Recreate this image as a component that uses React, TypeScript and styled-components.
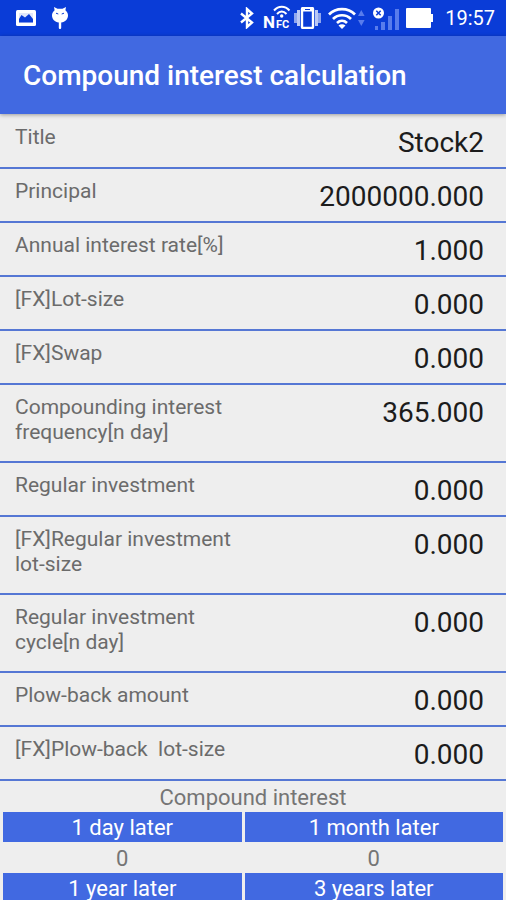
import React from "react";
import styled, { createGlobalStyle } from "styled-components";

const GlobalStyle = createGlobalStyle`
  *, *::before, *::after { box-sizing: border-box; }
  body {
    margin: 0;
    background: #eeeeee;
    font-family: Roboto, "Liberation Sans", sans-serif;
  }
`;

const Screen = styled.div`
  display: flex;
  flex-direction: column;
  height: 100vh;
  overflow: hidden;
  background: #eeeeee;
`;

const StatusBar = styled.div`
  display: flex;
  flex: none;
  align-items: center;
  justify-content: space-between;
  height: 36px;
  padding: 0 11px 0 16px;
  background: #0a3cd7;
  color: #ffffff;
`;

const IconGroup = styled.div<{ $gap: number }>`
  display: flex;
  align-items: center;
  gap: ${(p) => p.$gap}px;

  svg { display: block; flex: none; }
`;

const NfcText = styled.text<{ $size: number }>`
  fill: #ffffff;
  font-size: ${(p) => p.$size}px;
  font-weight: 700;
`;

const Clock = styled.time`
  margin-left: 5px;
  font-size: 20px;
  line-height: 38px;
`;

const AppBar = styled.header`
  position: relative;
  flex: none;
  padding: 25px 23px 23px;
  background: #4169e1;
  box-shadow: 0 1px 4px rgba(0, 0, 0, 0.35);
`;

const AppTitle = styled.h1`
  margin: 0;
  color: #ffffff;
  font-size: 28px;
  font-weight: 500;
  line-height: 30px;
`;

const Fields = styled.form`
  flex: none;
  padding-top: 1px;
`;

const FieldRow = styled.div`
  display: flex;
  align-items: flex-start;
  justify-content: space-between;
  min-height: 54px;
  padding: 10px 22px 0 15px;
  border-bottom: 2px solid #5577d4;
`;

const FieldLabel = styled.label`
  flex: 0 0 50%;
  padding-bottom: 16px;
  color: #6b6b6b;
  font-size: 21px;
  line-height: 25px;
  white-space: pre-wrap;
`;

const FieldInput = styled.input`
  flex: 1;
  min-width: 0;
  height: 36px;
  padding: 0;
  border: 0;
  outline: 0;
  background: transparent;
  color: #1c1c1c;
  font-family: inherit;
  font-size: 28px;
  line-height: 36px;
  text-align: right;
`;

const Results = styled.table`
  flex: none;
  width: 100%;
  table-layout: fixed;
  border-collapse: separate;
  border-spacing: 3px 0;
  font-size: 22px;
  line-height: 28px;
  text-align: center;

  caption { height: 31px; padding-top: 3px; color: #757575; }
`;

const FirstColumn = styled.col`
  width: 48%;
`;

const Period = styled.th`
  padding: 2px 0 0;
  background: #4169e1;
  color: #ffffff;
  font-weight: 400;
`;

const Amount = styled.td`
  height: 31px;
  padding: 2px 0 0;
  color: #757575;
`;

const PictureIcon = () => (
  <svg width="20" height="16" viewBox="0 0 20 16" aria-hidden="true">
    <rect width="20" height="16" rx="1.5" fill="#fff" />
    <path d="M3 3h14v9.500H3z" fill="#0a3cd7" opacity=".12" />
    <path d="M3 12.500V9l2.500-4L9 7.500 13 4l4 5v3.500z" fill="#0a3cd7" />
  </svg>
);

const CatIcon = () => (
  <svg width="16" height="22" viewBox="0 0 16 22" aria-hidden="true">
    <path d="M2 0 5.500 1.700h5L14 0l-.6 3.200C15.200 4.700 16 6.500 16 8.500c0 3.700-2.800 6.500-6.800 7v5.200c0 1.700-2.400 1.700-2.400 0v-5.200C2.800 15 0 12.200 0 8.500c0-2 .8-3.800 2.600-5.300z" fill="#fff" />
    <path d="M4 6.200 6.300 7M12 6.200 9.700 7" stroke="#0a3cd7" strokeWidth="1" />
  </svg>
);

const BluetoothIcon = () => (
  <svg width="16" height="22" viewBox="0 0 16 22" fill="none" stroke="#fff" strokeWidth="2.400" aria-hidden="true">
    <path d="m1 6.500 11 9L7 20V2l5 4.500-11 9" />
  </svg>
);

const NfcIcon = () => (
  <svg width="28" height="32" viewBox="0 0 28 32" fill="none" stroke="#fff" aria-hidden="true">
    <g stroke="none">
      <NfcText x="0" y="26" $size={17}>N</NfcText>
      <NfcText x="13" y="26" $size={11}>FC</NfcText>
    </g>
    <path d="M11 8.500c4.500-5 11-5 15.500 0M14 12c3-3.200 6.500-3.200 9.500 0" strokeWidth="2" />
    <circle cx="18.700" cy="14" r="1.700" fill="#fff" stroke="none" />
  </svg>
);

const VibrateIcon = () => (
  <svg width="27" height="22" viewBox="0 0 27 22" aria-hidden="true">
    <path d="M0 6h3v10H0zM24 6h3v10h-3z" fill="#8fa6ee" />
    <path d="M3 3h3v16H3zM21 3h3v16h-3z" fill="#bac8f5" />
    <rect x="8" y="1" width="11" height="20" rx="1" fill="#0a3cd7" stroke="#fff" strokeWidth="2.400" />
    <path d="M8 1h11v3.500H8z" fill="#fff" />
    <path d="M11 2.500h5" stroke="#0a3cd7" />
  </svg>
);

const WifiIcon = () => (
  <svg width="38" height="22" viewBox="0 0 38 22" fill="none" stroke="#fff" strokeWidth="2.700" aria-hidden="true">
    <path d="M1 7.500c7-7.300 19-7.300 26 0M5 12c5-5 13-5 18 0M9 16c3-2.800 7-2.800 10 0" />
    <path d="m14 22-3.500-3.500c2-1.700 5-1.700 7 0z" fill="#fff" stroke="none" />
    <path d="m30 9 3.300-6L36.600 9zM30 13h6.600l-3.300 6z" fill="#587cec" stroke="none" />
  </svg>
);

const SignalIcon = () => (
  <svg width="26" height="23" viewBox="0 0 26 23" aria-hidden="true">
    <path d="M2 19h3v4H2zM8 15h4v8H8zM15 9h4v14h-4zM22 2h4v21h-4z" fill="#587cec" />
    <circle cx="5.500" cy="6" r="5.500" fill="#fff" />
    <path d="m3.300 3.800 4.400 4.400m0-4.400L3.300 8.200" stroke="#0a3cd7" strokeWidth="1.500" />
  </svg>
);

const BatteryIcon = () => (
  <svg width="27" height="20" viewBox="0 0 27 20" aria-hidden="true">
    <path d="M1 0h23q1 0 1 1v5h2v8h-2v5q0 1-1 1H1q-1 0-1-1V1q0-1 1-1z" fill="#fff" />
  </svg>
);

const fields = [
  { id: "title", label: "Title", value: "Stock2" },
  { id: "principal", label: "Principal", value: "2000000.000" },
  { id: "rate", label: "Annual interest rate[%]", value: "1.000" },
  { id: "lot", label: "[FX]Lot-size", value: "0.000" },
  { id: "swap", label: "[FX]Swap", value: "0.000" },
  { id: "frequency", label: "Compounding interest frequency[n day]", value: "365.000" },
  { id: "investment", label: "Regular investment", value: "0.000" },
  { id: "investment-lot", label: "[FX]Regular investment lot-size", value: "0.000" },
  { id: "cycle", label: "Regular investment cycle[n day]", value: "0.000" },
  { id: "plowback", label: "Plow-back amount", value: "0.000" },
  { id: "plowback-lot", label: "[FX]Plow-back  lot-size", value: "0.000" },
];

export default function App() {
  return (
    <>
      <GlobalStyle />
      <Screen>
        <StatusBar>
          <IconGroup $gap={16}>
            <PictureIcon />
            <CatIcon />
          </IconGroup>
          <IconGroup $gap={7}>
            <BluetoothIcon />
            <IconGroup $gap={3}>
              <NfcIcon />
              <VibrateIcon />
            </IconGroup>
            <WifiIcon />
            <SignalIcon />
            <BatteryIcon />
            <Clock>19:57</Clock>
          </IconGroup>
        </StatusBar>
        <AppBar>
          <AppTitle>Compound interest calculation</AppTitle>
        </AppBar>
        <Fields>
          {fields.map((f) => (
            <FieldRow key={f.id}>
              <FieldLabel htmlFor={f.id}>{f.label}</FieldLabel>
              <FieldInput id={f.id} defaultValue={f.value} />
            </FieldRow>
          ))}
        </Fields>
        <Results>
          <caption>Compound interest</caption>
          <colgroup>
            <FirstColumn />
            <col />
          </colgroup>
          <tbody>
            <tr>
              <Period scope="col">1 day later</Period>
              <Period scope="col">1 month later</Period>
            </tr>
            <tr>
              <Amount>0</Amount>
              <Amount>0</Amount>
            </tr>
            <tr>
              <Period scope="col">1 year later</Period>
              <Period scope="col">3 years later</Period>
            </tr>
          </tbody>
        </Results>
      </Screen>
    </>
  );
}
